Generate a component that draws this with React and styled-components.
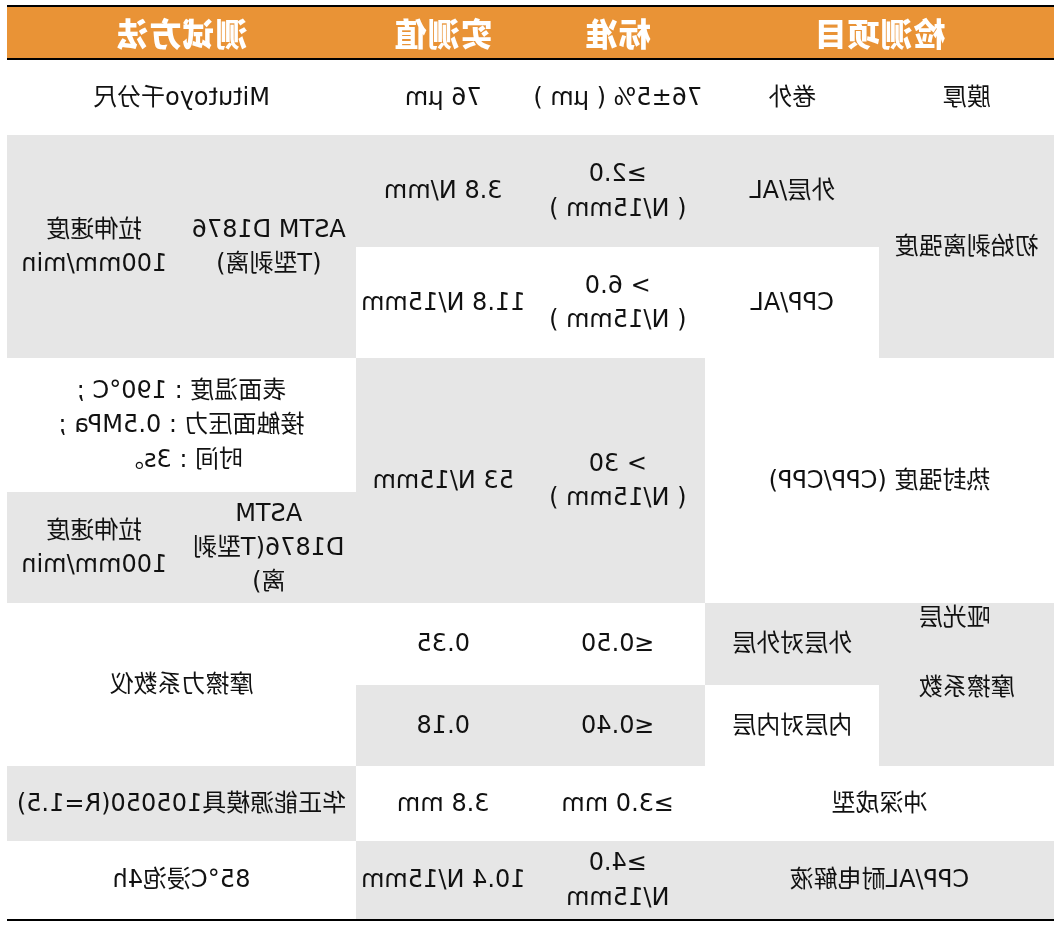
import React from 'react';
import styled, { createGlobalStyle } from 'styled-components';

const GlobalStyle = createGlobalStyle`
  html, body {
    margin: 0;
    padding: 0;
    background: #fff;
  }
  body {
    font-family: "DejaVu Sans", "Noto Sans CJK SC", sans-serif;
  }
`;

const Page = styled.div`
  padding-top: 5px;
  display: flex;
  justify-content: center;
`;

// the reference picture is flipped left-right, so the whole table is mirrored
const Mirror = styled.div`
  width: 1047px;
  transform: scaleX(-1);
`;

const Table = styled.div`
  display: grid;
  grid-template-columns: repeat(6, 1fr);
  grid-template-rows: 52.5px 75px 112px 111px 134px 111px 82px 81px 75px 78px;
  border-top: 2.5px solid #000;
  border-bottom: 2.5px solid #000;
`;

const Head = styled.div`
  grid-column: ${(p) => p.$col};
  grid-row: 1;
  background: #e99336;
  border-bottom: 2.6px solid #000;
  display: flex;
  align-items: center;
  justify-content: center;
  color: #fff;
  font-family: "Noto Sans CJK SC", sans-serif;
  font-weight: 900;
  font-size: 32px;
  letter-spacing: 1px;
`;

const Cell = styled.div`
  grid-column: ${(p) => p.$col};
  grid-row: ${(p) => p.$row};
  background: ${(p) => (p.$grey ? '#e6e6e6' : '#fff')};
  display: flex;
  align-items: ${(p) => (p.$top ? 'flex-start' : 'center')};
  justify-content: center;
  text-align: center;
  white-space: pre-line;
  font-size: 24px;
  line-height: 1.42;
  color: #111;
  overflow: hidden;
`;

const TallLabel = styled.span`
  display: inline-block;
  text-align: right;
  line-height: 70px;
  margin-top: -21px;
`;

export default function App() {
  return (
    <>
      <GlobalStyle />
      <Page>
        <Mirror>
          <Table>
            <Head $col="1 / 3">检测项目</Head>
            <Head $col="3">标准</Head>
            <Head $col="4">实测值</Head>
            <Head $col="5 / 7">测试方法</Head>

            <Cell $col="1" $row="2">膜厚</Cell>
            <Cell $col="2" $row="2">卷外</Cell>
            <Cell $col="3" $row="2">76±5% ( μm )</Cell>
            <Cell $col="4" $row="2">76 μm</Cell>
            <Cell $col="5 / 7" $row="2">Mitutoyo千分尺</Cell>

            <Cell $col="1" $row="3 / 5" $grey>初始剥离强度</Cell>
            <Cell $col="2" $row="3" $grey>外层/AL</Cell>
            <Cell $col="3" $row="3" $grey>{'≥2.0\n( N/15mm )'}</Cell>
            <Cell $col="4" $row="3" $grey>3.8 N/mm</Cell>
            <Cell $col="2" $row="4">CPP/AL</Cell>
            <Cell $col="3" $row="4">{'> 6.0\n( N/15mm )'}</Cell>
            <Cell $col="4" $row="4">11.8 N/15mm</Cell>
            <Cell $col="5" $row="3 / 5" $grey>{'ASTM D1876\n(T型剥离)'}</Cell>
            <Cell $col="6" $row="3 / 5" $grey>{'拉伸速度\n100mm/min'}</Cell>

            <Cell $col="1 / 3" $row="5 / 7">热封强度 (CPP/CPP)</Cell>
            <Cell $col="3" $row="5 / 7" $grey>{'> 30\n( N/15mm )'}</Cell>
            <Cell $col="4" $row="5 / 7" $grey>53 N/15mm</Cell>
            <Cell $col="5 / 7" $row="5">{'表面温度 : 190°C ;\n接触面压力 : 0.5MPa ;\n时间 : 3s。'}</Cell>
            <Cell $col="5" $row="6" $grey>{'ASTM\nD1876(T型剥\n离)'}</Cell>
            <Cell $col="6" $row="6" $grey>{'拉伸速度\n100mm/min'}</Cell>

            <Cell $col="1" $row="7 / 9" $grey $top>
              <TallLabel>{'哑光层\n摩擦系数'}</TallLabel>
            </Cell>
            <Cell $col="2" $row="7" $grey>外层对外层</Cell>
            <Cell $col="3" $row="7">≤0.50</Cell>
            <Cell $col="4" $row="7">0.35</Cell>
            <Cell $col="2" $row="8">内层对内层</Cell>
            <Cell $col="3" $row="8" $grey>≤0.40</Cell>
            <Cell $col="4" $row="8" $grey>0.18</Cell>
            <Cell $col="5 / 7" $row="7 / 9">摩擦力系数仪</Cell>

            <Cell $col="1 / 3" $row="9">冲深成型</Cell>
            <Cell $col="3" $row="9">≥3.0 mm</Cell>
            <Cell $col="4" $row="9">3.8 mm</Cell>
            <Cell $col="5 / 7" $row="9" $grey>华正能源模具105050(R=1.5)</Cell>

            <Cell $col="1 / 3" $row="10" $grey>CPP/AL耐电解液</Cell>
            <Cell $col="3" $row="10" $grey>{'≥4.0\nN/15mm'}</Cell>
            <Cell $col="4" $row="10" $grey>10.4 N/15mm</Cell>
            <Cell $col="5 / 7" $row="10">85°C浸泡4h</Cell>
          </Table>
        </Mirror>
      </Page>
    </>
  );
}
